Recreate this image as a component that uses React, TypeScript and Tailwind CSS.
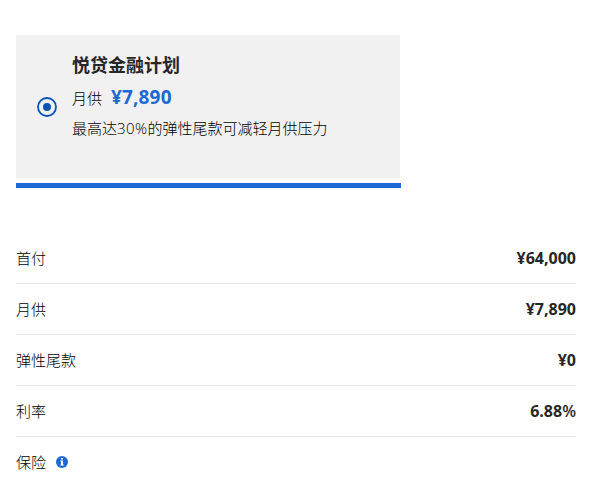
const rows = [
  { label: '首付', value: '¥64,000' },
  { label: '月供', value: '¥7,890' },
  { label: '弹性尾款', value: '¥0' },
  { label: '利率', value: '6.88', unit: '%' },
  { label: '保险', value: '', info: true },
]

function InfoIcon() {
  return (
    <svg width="12" height="12" viewBox="0 0 12 12" className="ml-2.5">
      <circle cx="6" cy="6" r="6" fill="#1c69d4" />
      <path d="M5 2h2v1.6H5zM4.3 4.6H7v4h.8v1H4.3v-1H5v-3h-.7z" fill="#fff" />
    </svg>
  )
}

function PlanCard() {
  return (
    <div className="w-[385px]">
      <div className="flex h-[143px] w-[384px] bg-[#f1f1f1]">
        <div className="flex w-14 items-center pl-[21px]">
          <svg width="20" height="20" viewBox="0 0 20 20">
            <circle cx="10" cy="10" r="9" fill="none" stroke="#0653b6" strokeWidth="1.8" />
            <circle cx="10" cy="10" r="4" fill="#0653b6" />
          </svg>
        </div>
        <div className="pt-[15px]">
          <h2 className="text-[18px] leading-[30px] font-bold">悦贷金融计划</h2>
          <div className="flex h-[34px] items-center">
            <span className="pt-0.5 text-[15px] font-light text-black">月供</span>
            <span className="ml-[9px] text-[19px] font-bold tracking-[0.15px] text-[#1c69d4]">¥7,890</span>
          </div>
          <p className="text-[15px] leading-[29px] font-light text-black">
            最高达<span className="tracking-[0.4px]">30%</span>的弹性尾款可减轻月供压力
          </p>
        </div>
      </div>
      <div className="mt-[5px] h-[5px] bg-[#1c69d4]" />
    </div>
  )
}

export default function App() {
  return (
    <div className="h-[479px] overflow-hidden bg-white pt-[35px] pl-4 font-['Open_Sans','Noto_Sans_CJK_SC',sans-serif] text-[#262626]">
      <PlanCard />
      <div className="mt-[45px] w-[560px]">
        {rows.map((row) => (
          <div
            key={row.label}
            className="flex h-[51px] items-center justify-between border-b border-[#e6e6e6] text-[15px]"
          >
            <span className="flex items-center font-light text-black">
              {row.label}
              {row.info && <InfoIcon />}
            </span>
            <span className="pb-px text-[16px] font-bold">
              {row.value}
              {row.unit && <span className="font-semibold">{row.unit}</span>}
            </span>
          </div>
        ))}
      </div>
    </div>
  )
}
